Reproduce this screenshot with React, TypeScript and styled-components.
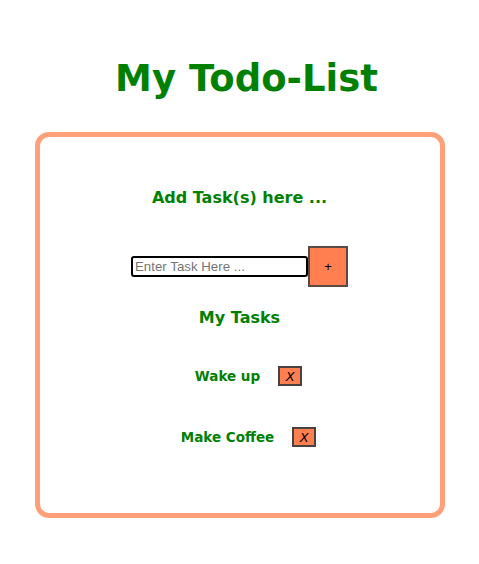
import React from "react";
import styled, { createGlobalStyle } from "styled-components";

const Global = createGlobalStyle`
  body {
    margin: 8px;
    background: #ffffff;
    font-family: "Comic Sans MS", "DejaVu Sans", sans-serif;
  }
`;

const Page = styled.div`
  display: flex;
  flex-direction: column;
  align-items: center;
`;

const Title = styled.h1`
  margin: 46px 0 0 14px;
  height: 78px;
  font-size: 37px;
  font-weight: bold;
  color: #008000;
  line-height: 50px;
`;

const Card = styled.div`
  box-sizing: border-box;
  width: 410px;
  height: 386px;
  border: 5px solid #ffa07a;
  border-radius: 14px;
  display: flex;
  flex-direction: column;
  align-items: center;
  padding-top: 49px;
`;

const Heading = styled.h3`
  margin: 0;
  font-size: 16px;
  line-height: 24px;
  color: #008000;
  font-weight: bold;
`;

const InputRow = styled.div`
  display: flex;
  align-items: center;
  margin-top: 36px;
`;

const TaskInput = styled.input`
  box-sizing: border-box;
  width: 177px;
  height: 21px;
  border: 2px solid #000;
  border-radius: 3px;
  padding: 0 2px;
  font-family: "Liberation Sans", Arial, sans-serif;
  font-size: 13.3px;
  &::placeholder {
    color: #757575;
  }
`;

const AddButton = styled.button`
  box-sizing: border-box;
  width: 40px;
  height: 41px;
  background: #ff7f50;
  border: 2px solid #5a4a44;
  font-family: "Liberation Sans", Arial, sans-serif;
  font-size: 13px;
  color: #000;
  padding: 0;
`;

const SubHeading = styled.h3`
  margin: 19px 0 0;
  font-size: 16px;
  line-height: 24px;
  color: #008000;
  font-weight: bold;
`;

const List = styled.ul`
  list-style: none;
  margin: 36px 0 0;
  padding: 0 0 0 18px;
  display: flex;
  flex-direction: column;
  align-items: center;
  gap: 41px;
`;

const Item = styled.li`
  display: flex;
  align-items: center;
  gap: 18px;
  height: 20px;
`;

const ItemText = styled.span`
  font-size: 13.5px;
  font-weight: bold;
  color: #008000;
`;

const DeleteButton = styled.button`
  box-sizing: border-box;
  width: 24px;
  height: 20px;
  background: #ff7f50;
  border: 2px solid #4a4040;
  padding: 0;
  font-family: "Comic Sans MS", "DejaVu Sans", sans-serif;
  font-style: italic;
  font-size: 13px;
  color: #000;
`;

const tasks = ["Wake up", "Make Coffee"];

export default function App() {
  return (
    <>
      <Global />
      <Page>
        <Title>My Todo-List</Title>
        <Card>
          <Heading>Add Task(s) here ...</Heading>
          <InputRow>
            <TaskInput placeholder="Enter Task Here ..." />
            <AddButton>+</AddButton>
          </InputRow>
          <SubHeading>My Tasks</SubHeading>
          <List>
            {tasks.map((t) => (
              <Item key={t}>
                <ItemText>{t}</ItemText>
                <DeleteButton>X</DeleteButton>
              </Item>
            ))}
          </List>
        </Card>
      </Page>
    </>
  );
}
